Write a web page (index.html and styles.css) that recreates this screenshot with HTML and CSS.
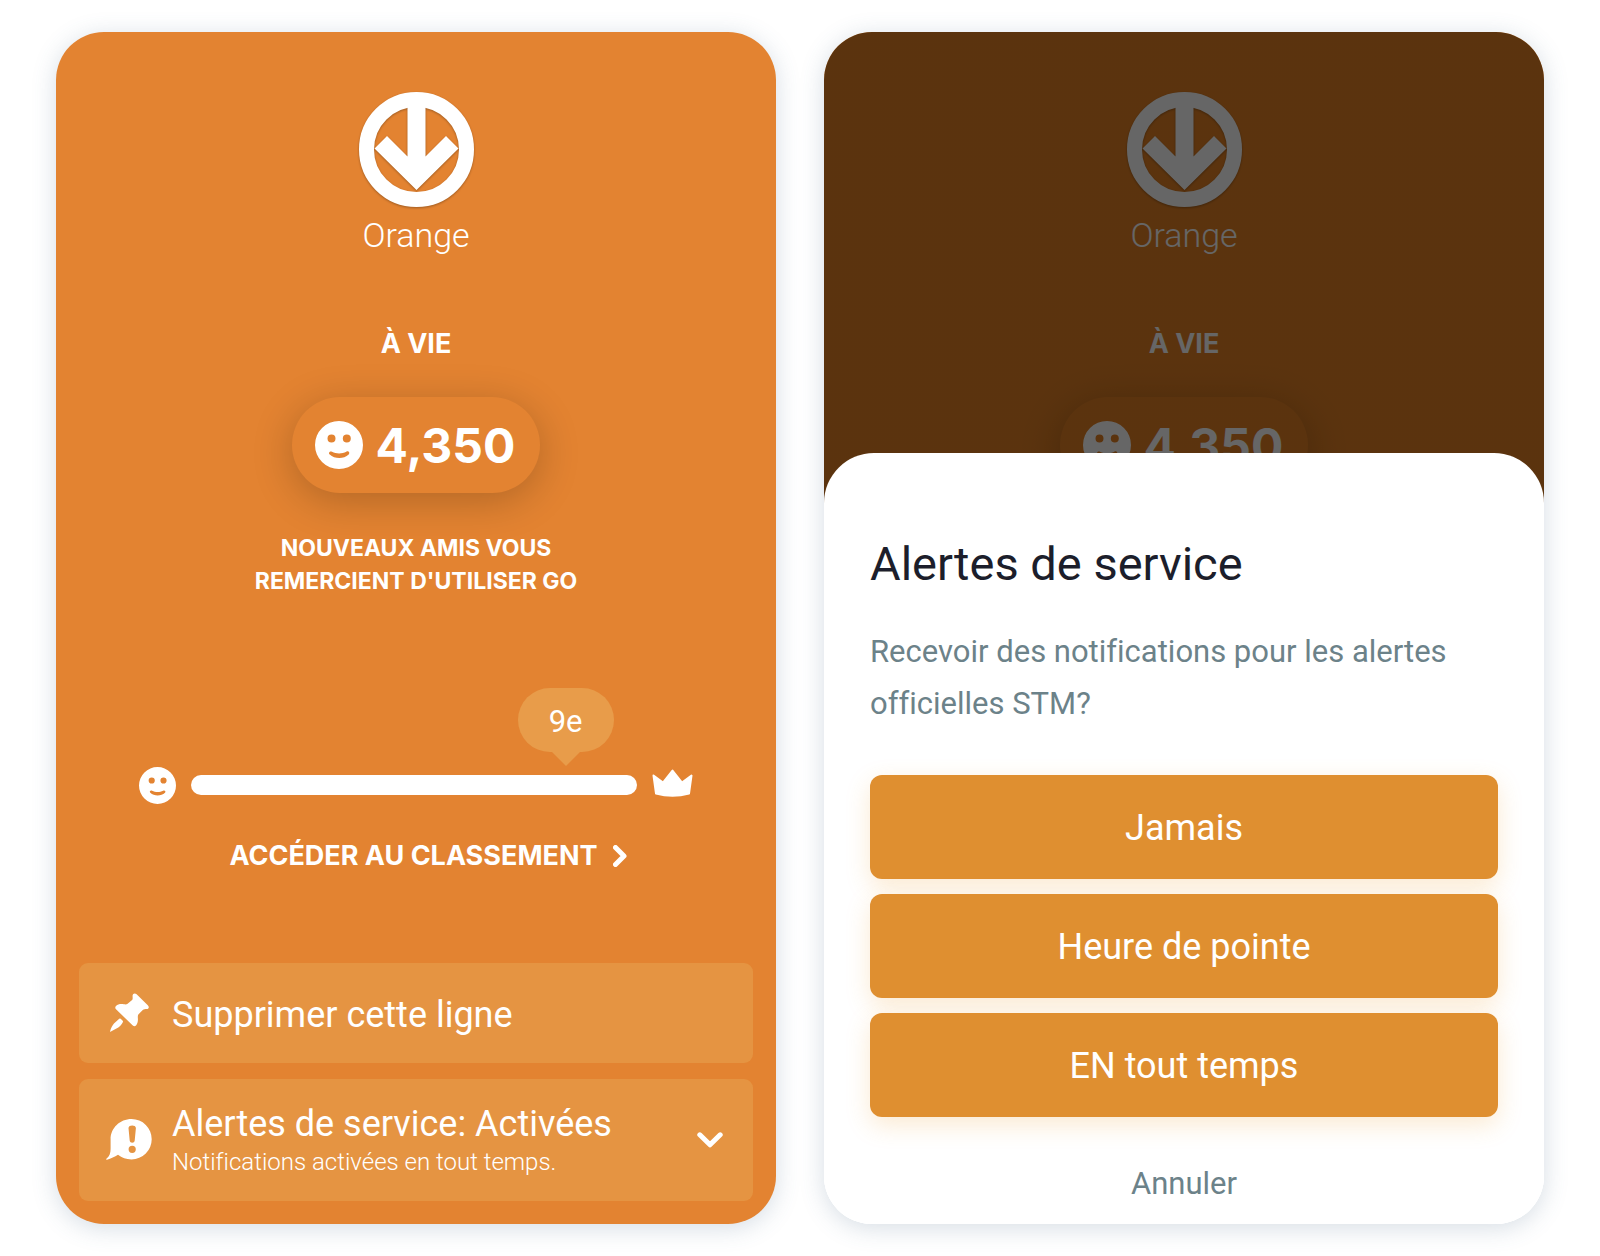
FILE: index.html
```html
<!DOCTYPE html>
<html lang="fr">
<head>
<meta charset="utf-8">
<meta name="viewport" content="width=device-width, initial-scale=1">
<title>Ligne Orange</title>
<link rel="stylesheet" href="styles.css">
</head>
<body>
<svg width="0" height="0" class="sprite" aria-hidden="true">
  <symbol id="metro" viewBox="0 0 115 115">
    <circle cx="57.5" cy="57.5" r="50" fill="none" stroke="currentColor" stroke-width="15"/>
    <path fill="currentColor" d="M48.5 12h18v52.5L87 44l12.5 12.500-42 41.500-42-41.500L28 44l20.500 20.500z"/>
  </symbol>
  <symbol id="smile" viewBox="0 0 48 48">
    <path fill="currentColor" fill-rule="evenodd" d="M24 0a24 24 0 1 1 0 48 24 24 0 0 1 0-48zM16.500 13.500a4 4 0 1 0 0 8 4 4 0 0 0 0-8zM31.800 13.500a4 4 0 1 0 0 8 4 4 0 0 0 0-8zM17 30.700c-2.100-1.200-4 1.200-2.300 2.800 5 4.700 14 4.700 19 0 1.600-1.700-.3-4-2.400-2.800-4.200 2.300-10.100 2.300-14.300 0z"/>
  </symbol>
  <symbol id="crown" viewBox="0 0 41 32">
    <path fill="currentColor" stroke="currentColor" stroke-width="2" stroke-linejoin="round" d="M1.500 6.500 11 13.500 20.500 1.500 30 13.500 39.500 6.500 37 24.500Q20.500 29 4 24.500z"/>
  </symbol>
  <symbol id="pin" viewBox="0 0 39 39">
    <path fill="currentColor" d="M22.600 2.600C22.800.4 25 0 26.600 1.300L37.800 12.300C39.500 14 38.800 16 36.800 16.100 35 16.200 34 16 32.500 17.300L28.800 21C27.800 22 27.700 23.500 27.900 25.500 28.100 28.500 27.500 30.800 26 32.400 25 33.500 23.800 33.400 22.800 32.500L6 16.300C5 15.300 5 14 6 13 8 11.200 10.500 10.700 14 11.300 15.800 11.600 16.600 11.500 17.600 10.700L21.500 7.600C23.200 6.200 22.500 4.500 22.600 2.600zM9.200 25.800Q10 25.200 10.700 25.800L12.700 27.800Q13.300 28.500 12.800 29.300C11.800 31.300 10 33.300 8.300 34.500L.9 38.600C.2 39 0 38.700.1 38.200 1 34.500 2.500 32.300 4 30.500z"/>
  </symbol>
  <symbol id="alert" viewBox="0 0 46 41">
    <path fill="currentColor" fill-rule="evenodd" d="M25.500 0a20.200 20.200 0 1 1 0 40.400c-5.500 0-9.500-1.700-13.500-4.600-3.300 2-7 3.700-11 4.900-.8.200-1.200-.4-.6-.9C3.600 37.300 4.600 34 4.600 30V20.200C4.600 9 14 0 25.500 0zM22.500 9c0-3.300 7.400-3.300 7.400 0L28.700 21.500c-.3 3-4.700 3-5 0zM26.200 26.700a3.600 3.600 0 1 0 0 7.200 3.600 3.600 0 0 0 0-7.200z"/>
  </symbol>
</svg>

<main class="screens">
  <section class="screen">
    <header class="line">
      <svg class="line-logo" aria-hidden="true"><use href="#metro"/></svg>
      <h1 class="line-name">Orange</h1>
      <p class="period">À VIE</p>
      <p class="score"><svg class="score-icon" aria-hidden="true"><use href="#smile"/></svg>4,350</p>
    </header>
    <p class="thanks">NOUVEAUX AMIS VOUS<br>REMERCIENT D'UTILISER GO</p>
    <div class="rank">
      <svg class="rank-smile" aria-hidden="true"><use href="#smile"/></svg>
      <div class="track"><span class="bubble" style="left: 84%">9e</span></div>
      <svg class="rank-crown" aria-hidden="true"><use href="#crown"/></svg>
    </div>
    <a class="ranking-link" href="#classement">ACCÉDER AU CLASSEMENT
      <svg width="14" height="22" viewBox="0 0 14 22" class="chevron" aria-hidden="true"><path d="M2.500 2.500 11 11l-8.500 8.500"/></svg>
    </a>
    <div class="actions">
      <button class="action" type="button">
        <svg class="action-icon" aria-hidden="true"><use href="#pin" x="5" y="2" width="39" height="39"/></svg>
        <span class="action-title">Supprimer cette ligne</span>
      </button>
      <button class="action" type="button">
        <svg class="action-icon" aria-hidden="true"><use href="#alert" x="1" y="1" width="46" height="41"/></svg>
        <span class="action-text">
          <span class="action-title">Alertes de service: Activées</span>
          <span class="action-note">Notifications activées en tout temps.</span>
        </span>
        <svg width="26" height="16" viewBox="0 0 26 16" class="chevron" aria-hidden="true"><path d="M2.800 2.800 13 12.800l10.200-10"/></svg>
      </button>
    </div>
  </section>

  <section class="screen screen-dimmed">
    <header class="line" aria-hidden="true">
      <svg class="line-logo"><use href="#metro"/></svg>
      <p class="line-name">Orange</p>
      <p class="period">À VIE</p>
      <p class="score"><svg class="score-icon"><use href="#smile"/></svg>4,350</p>
    </header>
    <div class="overlay">
      <div class="sheet" role="dialog" aria-labelledby="sheet-title">
        <h2 class="sheet-title" id="sheet-title">Alertes de service</h2>
        <p class="sheet-text">Recevoir des notifications pour les alertes officielles STM?</p>
        <div class="choices">
          <button class="choice" type="button">Jamais</button>
          <button class="choice" type="button">Heure de pointe</button>
          <button class="choice" type="button">EN tout temps</button>
        </div>
        <button class="cancel" type="button">Annuler</button>
      </div>
    </div>
  </section>
</main>
</body>
</html>
```

FILE: styles.css
```css
* {
  box-sizing: border-box;
}

body {
  margin: 0;
  background: #fff;
  font-family: Roboto, "Liberation Sans", sans-serif;
  font-variant-ligatures: none;
}

h1, h2, p {
  margin: 0;
  font-weight: inherit;
}

button {
  border: 0;
  margin: 0;
  color: inherit;
  font: inherit;
  font-variant-ligatures: none;
  cursor: pointer;
}

.sprite {
  position: absolute;
}

.screens {
  display: grid;
  grid-template-columns: 1fr 1fr;
  gap: 48px;
  padding: 32px 56px;
}

.screen {
  display: flex;
  flex-direction: column;
  position: relative;
  overflow: hidden;
  padding: 60px 23px 23px;
  border-radius: 48px;
  background: #e38331;
  box-shadow: 0 4px 24px rgba(70, 100, 130, 0.22);
  color: #fff;
}

.screen-dimmed {
  background: linear-gradient(#e38023 50%, #fff 50%);
}

.line {
  display: flex;
  flex-direction: column;
  align-items: center;
}

.line-logo {
  width: 115px;
  height: 115px;
  filter: drop-shadow(0 1px 1px rgba(0, 0, 0, 0.3));
}

.line-name {
  margin-top: 8px;
  font-size: 34px;
  font-weight: 300;
  line-height: 40px;
}

.period {
  margin-top: 73px;
  font-family: Inter, sans-serif;
  font-size: 27px;
  font-weight: 700;
  line-height: 32px;
}

.score {
  display: flex;
  align-items: center;
  gap: 13px;
  height: 96px;
  margin-top: 37px;
  padding: 0 25px 0 23px;
  border-radius: 48px;
  box-shadow: 0 8px 40px rgba(0, 0, 0, 0.22);
  font-family: Inter, sans-serif;
  font-size: 48px;
  font-weight: 700;
}

.score-icon {
  width: 48px;
  height: 48px;
}

.thanks {
  margin-top: 39px;
  font-family: Inter, sans-serif;
  font-size: 23px;
  font-weight: 700;
  line-height: 33px;
  text-align: center;
}

.rank {
  display: flex;
  align-items: center;
  gap: 15px;
  height: 40px;
  margin-top: 167px;
  padding: 0 60px;
}

.rank-smile {
  width: 37px;
  height: 37px;
}

.rank-crown {
  width: 41px;
  height: 32px;
}

.track {
  flex: 1;
  position: relative;
  height: 20px;
  border-radius: 10px;
  background: #fff;
}

.bubble {
  position: absolute;
  bottom: 43px;
  width: 96px;
  margin-left: -48px;
  padding-top: 4px;
  border-radius: 32px;
  background: #e89c4a;
  font-size: 31px;
  line-height: 60px;
  text-align: center;
}

.bubble::after {
  content: "";
  position: absolute;
  top: 100%;
  left: 50%;
  margin-left: -14px;
  border: 14px solid transparent;
  border-top-color: #e89c4a;
  border-bottom: 0;
}

.ranking-link {
  display: flex;
  align-items: center;
  justify-content: center;
  gap: 15px;
  margin-top: 35px;
  padding-left: 24px;
  color: inherit;
  font-family: Inter, sans-serif;
  font-size: 27px;
  font-weight: 700;
  line-height: 32px;
  text-decoration: none;
}

.chevron {
  fill: none;
  stroke: currentColor;
  stroke-width: 5;
  stroke-linecap: round;
  stroke-linejoin: round;
}

.actions {
  display: grid;
  gap: 16px;
  margin-top: 91px;
}

.action {
  display: flex;
  align-items: center;
  gap: 19px;
  min-height: 100px;
  padding: 21px 30px 21px 26px;
  border-radius: 9px;
  background: #e59442;
  text-align: left;
}

.action-icon {
  width: 48px;
  height: 44px;
}

.action-text {
  flex: 1;
}

.action-title {
  display: block;
  padding-top: 4px;
  font-size: 36px;
  line-height: 40px;
}

.action-note {
  display: block;
  font-size: 24px;
  font-weight: 300;
  line-height: 36px;
}

.overlay {
  position: absolute;
  inset: 0;
  display: flex;
  flex-direction: column;
  justify-content: flex-end;
  background: linear-gradient(rgba(0, 0, 0, 0.6) 50%, #fff 50%);
}

.sheet {
  display: flex;
  flex-direction: column;
  padding: 83px 46px 20px;
  border-radius: 50px 50px 0 0;
  background: #fff;
  color: #6c8289;
  font-size: 31px;
}

.sheet-title {
  color: #1c1e2b;
  font-size: 47px;
  line-height: 56px;
}

.sheet-text {
  margin-top: 34px;
  line-height: 52px;
}

.choices {
  display: grid;
  gap: 15px;
  margin-top: 45px;
}

.choice {
  height: 104px;
  padding: 2px 0 0;
  border-radius: 12px;
  background: #df8f30;
  box-shadow: 0 8px 24px rgba(235, 160, 50, 0.22);
  color: #fff;
  font-size: 36px;
}

.cancel {
  align-self: center;
  margin-top: 47px;
  padding: 0;
  background: none;
  line-height: 40px;
}
```
